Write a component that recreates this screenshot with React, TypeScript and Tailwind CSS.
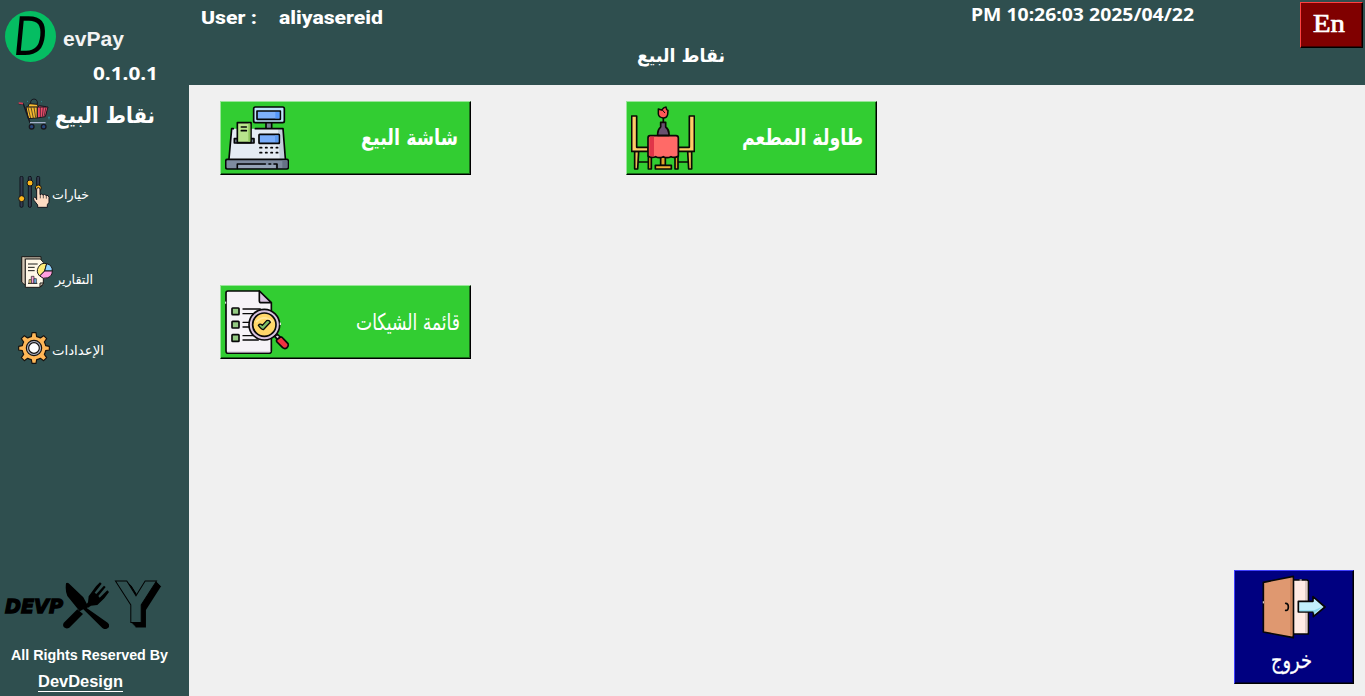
import { useLayoutEffect, useRef, useState } from "react";
import type { ReactNode } from "react";

/** A single line of text, stretched horizontally to fill the width of its box. */
function FitText({ className, children, rtl = false }: { className: string; children: ReactNode; rtl?: boolean }) {
  const box = useRef<HTMLDivElement>(null);
  const line = useRef<HTMLSpanElement>(null);
  const [scale, setScale] = useState(1);
  useLayoutEffect(() => {
    if (box.current && line.current && line.current.offsetWidth > 0) {
      setScale(box.current.offsetWidth / line.current.getBoundingClientRect().width);
    }
  }, []);
  return (
    <div ref={box} dir="ltr" className={"shrink-0 whitespace-nowrap text-left " + className}>
      <span ref={line} dir={rtl ? "rtl" : "ltr"} className="inline-block origin-left" style={{ transform: `scaleX(${scale})` }}>
        {children}
      </span>
    </div>
  );
}

function CartIcon() {
  return (
    <svg viewBox="54 294 96 96" className="size-8 shrink-0" fill="none" stroke="#17171f" strokeWidth="3" strokeLinejoin="round">
      <path d="M92 318V305q2-8 10-8t10 8v13" />
      <path d="M83 322l5-11 24 2 3 9z" fill="#f9bd31" />
      <path d="M113 321l5-4 20 3 1 22h-27z" fill="#ee5271" />
      <path d="M78 321h34v33l-27 2z" fill="#f5b82e" />
      <path d="M112 321h32l-8 29-24 4z" fill="#ee4c6a" />
      <path d="M84 322l8 33M93 322l7 32M102 322l5 31M121 322v30M130 322l-3 28M138 322l-6 28" strokeWidth="2" />
      <path d="M56 311l14 1 20 56h47" strokeWidth="4" />
      <path d="M56 309l13 2" stroke="#d83a55" strokeWidth="5" />
      <path d="M90 368h47" stroke="#a5b4cd" strokeWidth="4" />
      <circle cx="95" cy="380" r="7" fill="#27467c" strokeWidth="4" />
      <circle cx="131" cy="380" r="7" fill="#27467c" strokeWidth="4" />
      <path d="M145 352h4M147 350v8M81 304h3M123 305h3" stroke="#33a7ba" strokeWidth="2" />
    </svg>
  );
}

function SlidersIcon() {
  return (
    <svg viewBox="54 48 96 96" className="size-8 shrink-0" fill="none" stroke="#10141d" strokeWidth="3" strokeLinejoin="round">
      <rect x="60" y="49" width="9" height="93" rx="4" fill="#343d50" />
      <rect x="85" y="49" width="9" height="93" rx="4" fill="#343d50" />
      <rect x="110" y="49" width="9" height="50" rx="4" fill="#343d50" />
      <circle cx="65" cy="116" r="9" fill="#ffb71b" />
      <circle cx="90" cy="69" r="9" fill="#ffb71b" />
      <circle cx="115" cy="84" r="9" fill="#ffb71b" />
      <path d="M110 119V87q0-4 5-4t5 4v17q5-4 9 1 5-4 9 1 8-2 9 6v15l-5 7v8h-29v-7l-11-14q-4-8 2-10 4 0 6 8z" fill="#fddcc3" />
      <path d="M121 104v11M130 105v10M139 107v9" strokeWidth="2" />
    </svg>
  );
}

function ReportIcon() {
  return (
    <svg viewBox="63 288 96 96" className="size-8 shrink-0" fill="none" stroke="#1b1a18" strokeWidth="3" strokeLinejoin="round">
      <path d="M65 290h58v83H73l-8-7z" fill="#b5a999" />
      <path d="M70 292v78" stroke="#e7dcca" strokeWidth="2" />
      <path d="M76 297h45l9 10v66l-9 9H76z" fill="#fff8e8" />
      <path d="M120 381v-12h11z" fill="#e6d8c4" />
      <path d="M84 312h29M84 322h20M84 332h20" strokeWidth="3" />
      <path d="M84 370h28" />
      <path d="M87 359h7v11h-7z" fill="#fce67c" strokeWidth="2" />
      <path d="M94 349h8v21h-8z" fill="#f59fd5" strokeWidth="2" />
      <path d="M102 356h7v14h-7z" fill="#75b9f0" strokeWidth="2" />
      <path d="M134 333L140 311A22 22 0 0 0 119 348z" fill="#fdec77" />
      <path d="M134 333L140 311A22 22 0 0 1 157 333z" fill="#8ed2ff" />
      <path d="M134 333H157A22 22 0 0 1 119 348z" fill="#ff9fdf" />
    </svg>
  );
}

function GearIcon() {
  return (
    <svg viewBox="54 516 96 96" className="size-8 shrink-0" stroke="#14120f" strokeWidth="3.5" strokeLinejoin="round">
      <path
        fill="#ffb757"
        d="M96 518h12l2 12q6 1 11 4l10-7 9 9-7 10q3 5 4 11l11 2v11l-11 2q-1 6-4 11l7 10-9 9-10-7q-5 3-11 4l-2 11H96l-2-11q-6-1-11-4l-10 7-9-9 7-10q-3-5-4-11l-11-2v-11l11-2q1-6 4-11l-7-10 9-9 10 7q5-3 11-4z"
      />
      <circle cx="102" cy="564" r="23" fill="#aeb2c6" />
      <circle cx="102" cy="564" r="16" fill="#fff" />
    </svg>
  );
}

function RegisterIcon() {
  return (
    <svg viewBox="45 48 192 192" className="size-16 shrink-0" fill="none" stroke="#050607" strokeWidth="5" strokeLinejoin="round" strokeLinecap="round">
      <rect x="168" y="96" width="17" height="22" fill="#788293" />
      <rect x="131" y="51" width="92" height="47" rx="5" fill="#bfe4fb" />
      <rect x="141" y="63" width="70" height="25" fill="#7db0fa" />
      <path d="M196 66h12v19h-12z" fill="#569afd" stroke="none" />
      <path d="M65 116h154l8 92H57z" fill="#e4ebf3" stroke="none" />
      <path d="M204 118h13l7 89h-15z" fill="#c3cedb" stroke="none" />
      <path d="M70 116h-5l-8 90M136 116h83l7 90" />
      <path d="M81 146h-8v13h59v-13h-9" fill="#717c8e" />
      <path d="M82 158V98h41v60z" fill="#b9e58c" />
      <path d="M115 101h6v54h-6z" fill="#8fc75d" stroke="none" />
      <path d="M94 111h15M94 122h15" />
      <rect x="147" y="133" width="61" height="27" rx="2" fill="#79adfa" />
      <path d="M195 136h10v20h-10z" fill="#5c9bf1" stroke="none" />
      <path d="M150 173h5M167 173h4M183 173h4M199 173h4M150 188h5M167 188h4M183 188h4M199 188h4" />
      <rect x="47" y="208" width="188" height="29" rx="5" fill="#7e8b9f" />
      <path d="M217 211h15v23h-15z" fill="#667286" stroke="none" />
      <path d="M82 235v-13h84M177 222h5M192 222h9v13" />
      <path d="M85 225h112v9H85z" fill="#97a4b8" stroke="none" />
    </svg>
  );
}

function TableIcon() {
  return (
    <svg viewBox="45 48 192 192" className="size-16 shrink-0" fill="none" stroke="#0b0905" strokeWidth="5" strokeLinejoin="round" strokeLinecap="round">
      <path d="M68 216h29M185 216h31" />
      <path d="M56 184h12l-3 53h-9zM215 184h12v53h-9z" fill="#efbd57" />
      <path d="M47 78h15v94h35v12H47zM220 78h15v106h-48v-12h33z" fill="#ffcc67" />
      <path d="M97 198h9v39h-9zM177 198h9v39h-9z" fill="#dca12b" />
      <path d="M134 201h14v26h-14z" fill="#dca12b" />
      <path d="M118 226h48v11h-48z" fill="#efaf37" />
      <path d="M102 137h78q7 0 7 7v54q-11 7-22 2-12 6-23 0-12 6-23 0-12 5-23-2v-54q0-7 6-7z" fill="#ff6a67" />
      <path d="M103 140h11v58q-8 2-14-1v-54q0-3 3-3z" fill="#e03449" stroke="none" />
      <path d="M134 97h15v14q10 8 10 20v5h-34v-5q0-12 9-20z" fill="#67506f" />
      <path d="M142 84v12" />
      <path d="M127 57l10 3q6-8 13-9l2 8 4 2-1 12q-2 11-13 11-14-2-15-12z" fill="#ff5756" strokeWidth="4.5" />
      <path d="M139 60l7 8" strokeWidth="3" />
    </svg>
  );
}

function ChecklistIcon() {
  return (
    <svg viewBox="45 45 192 192" className="size-16 shrink-0" fill="none" stroke="#090909" strokeWidth="5" strokeLinejoin="round" strokeLinecap="round">
      <path d="M54 48h94l36 36v144q0 7-7 7H54q-6 0-6-7V53q0-5 6-5z" fill="#f6f3f7" />
      <path d="M148 48v29q0 6 6 6h30z" fill="#d9c4e0" />
      <path d="M52 230h128" stroke="#dfd4e4" strokeWidth="3" />
      <rect x="66" y="99" width="21" height="20" rx="2" fill="#94ca82" />
      <rect x="66" y="139" width="21" height="20" rx="2" fill="#94ca82" />
      <rect x="66" y="179" width="21" height="20" rx="2" fill="#94ca82" />
      <path d="M99 102h52M99 116h31M99 142h20M99 156h20M99 182h33M99 195h46" strokeWidth="4" />
      <circle cx="163" cy="149" r="46" fill="#d8c3df" />
      <circle cx="163" cy="149" r="35" fill="#ffd76a" />
      <path d="M140 139q23-21 46 0" stroke="#ffe79b" strokeWidth="5" />
      <path d="M145 151q5-7 12 0l13-14q8-3 11 5l-21 22q-5 0-15-13z" fill="#7dbe68" strokeWidth="4" />
      <path d="M194 184l8-6 9 8-8 8z" fill="#e6d7e8" />
      <path d="M201 194l10-8q4-1 8 4l15 16q3 7-4 13-6 4-12-1l-17-17q-3-4 0-7z" fill="#ef3341" />
      <path d="M47 81v4M211 144v5" stroke="#fff" strokeWidth="3" />
    </svg>
  );
}

function DoorIcon() {
  return (
    <svg viewBox="111 45 192 192" className="size-16 shrink-0" fill="none" stroke="#070707" strokeWidth="5" strokeLinejoin="round" strokeLinecap="round">
      <path d="M205 60h40q5 0 5 5v157h-45z" fill="#ffebe5" />
      <path d="M240 63h7v155h-7z" fill="#dfcbc7" stroke="none" />
      <path d="M115 67l90-18v184l-90-17z" fill="#df9870" />
      <path d="M195 54h7v172h-7z" fill="#cf875f" stroke="none" />
      <path d="M182 130q8 0 8 11t-8 10" />
      <path d="M220 124h44v-14l36 31-35 29v-14h-45z" fill="#c3f0fc" />
      <path d="M223 151h45l26-12-27 22-2-7h-42z" fill="#88d7ee" stroke="none" />
      <path d="M115 125v4M225 60h4" stroke="#fff2e8" strokeWidth="3" />
    </svg>
  );
}

function CutleryIcon() {
  return (
    <svg viewBox="189 69 138 141" className="h-[47px] w-[46px] shrink-0" fill="#000">
      <path d="M198 73q3-4 8 0l44 42 12 22q2 8-1 11l62 43q9 9 1 16-9 7-17 0l-57-56-11 6-37-46q-7-15-4-38z" />
      <path d="M232 151l17 14-41 41q-9 5-16-1-6-8 1-15z" />
      <path d="M264 130l2-18 22-30 12-12 5 4-21 27 5 4 23-25 5 4-22 27 4 5 23-22 5 5-14 19-21 20-19 2-9 6-8-6z" />
    </svg>
  );
}

function TileButton({ icon, label, labelClass }: { icon: ReactNode; label: string; labelClass: string }) {
  return (
    <button
      type="button"
      className="flex h-[74px] w-[251px] shrink-0 border border-t-[#98e698] border-l-[#98e698] border-r-black border-b-black bg-[#32cd32] pl-1 pt-1 shadow-[inset_-1px_-1px_0_#196719]"
    >
      {icon}
      <FitText rtl className={labelClass}>{label}</FitText>
    </button>
  );
}

function Sidebar() {
  return (
    <aside className="flex h-[696px] w-[189px] shrink-0 flex-col bg-[#2f4f4f] text-white">
      <div className="flex h-[62px] shrink-0 pl-[5px] pt-[11px]">
        <div className="flex size-[51px] shrink-0 items-center justify-center rounded-full bg-[#05bd62]">
          <span className="inline-block -skew-x-6 scale-x-[0.92] font-['DejaVu_Sans_Condensed','DejaVu_Sans'] text-[53px] leading-[49px] text-black">D</span>
        </div>
        <FitText className="ml-[7px] mt-[14px] h-7 w-[61px] font-['Liberation_Sans',sans-serif] text-[21px] font-bold leading-[28px] text-[#f3f3f3]">evPay</FitText>
      </div>
      <FitText className="ml-[93px] h-[22px] w-[65px] font-['Noto_Sans',sans-serif] text-[18px] font-bold leading-[22px]">0.1.0.1</FitText>
      <nav className="flex flex-col">
        <div className="mt-[14px] flex h-8 pl-[18px]">
          <CartIcon />
          <FitText rtl className="ml-[5px] mt-[2px] h-8 w-[100px] font-['DejaVu_Sans',sans-serif] text-[22px] font-bold leading-[32px]">نقاط البيع</FitText>
        </div>
        <div className="mt-[46px] flex h-8 pl-[18px]">
          <SlidersIcon />
          <FitText rtl className="ml-[2px] mt-[7px] h-6 w-[37px] font-['DejaVu_Sans',sans-serif] text-[13px] leading-[24px]">خيارات</FitText>
        </div>
        <div className="mt-12 flex h-8 pl-[21px]">
          <ReportIcon />
          <FitText rtl className="ml-[2px] mt-[12px] h-6 w-[38px] font-['DejaVu_Sans',sans-serif] text-[13px] leading-[24px]">التقارير</FitText>
        </div>
        <div className="mt-11 flex h-8 pl-[18px]">
          <GearIcon />
          <FitText rtl className="ml-[2px] mt-[7px] h-6 w-[52px] font-['DejaVu_Sans',sans-serif] text-[13px] leading-[24px]">الإعدادات</FitText>
        </div>
      </nav>
      <div className="mt-auto flex h-[54px] items-center pl-[5px] text-black">
        <FitText className="mt-[2px] h-7 w-[58px] font-['DejaVu_Sans',sans-serif] text-[20px] font-bold italic leading-[28px] [-webkit-text-stroke:1.4px_black]">DEVP</FitText>
        <CutleryIcon />
        <FitText className="-mt-[4px] ml-[7px] h-[54px] w-[40px] font-['DejaVu_Sans',sans-serif] text-[57px] font-bold leading-[54px] text-[#2f4f4f] [-webkit-text-stroke:1px_black] [text-shadow:1px_1px_0_black,2px_2px_0_black,3px_3px_0_black,4px_4px_0_black,5px_5px_0_black]">Y</FitText>
      </div>
      <FitText className="ml-[11px] mt-[13px] h-5 w-[157px] font-['Liberation_Sans',sans-serif] text-[14px] font-bold leading-[20px]">All Rights Reserved By</FitText>
      <FitText className="mb-[4px] ml-[38px] mt-[5px] h-[22px] w-[85px] border-b border-white font-['Liberation_Sans',sans-serif] text-[16px] font-bold leading-[23px]">DevDesign</FitText>
    </aside>
  );
}

function Header() {
  return (
    <header className="flex h-[85px] shrink-0 bg-[#2f4f4f] text-white">
      <FitText className="ml-3 mt-[6px] h-6 w-[56px] font-['Roboto',sans-serif] text-[18px] font-extrabold leading-[24px]">User :</FitText>
      <FitText className="ml-[22px] mt-[6px] h-6 w-[104px] font-['Roboto',sans-serif] text-[18px] font-extrabold leading-[24px]">aliyasereid</FitText>
      <FitText rtl className="ml-[254px] mt-[39px] h-8 w-[88px] font-['DejaVu_Sans',sans-serif] text-[19px] font-bold leading-[32px]">نقاط البيع</FitText>
      <FitText className="ml-[246px] mt-[2px] h-6 w-[223px] font-['Noto_Sans',sans-serif] text-[18px] font-bold leading-[24px]">PM 10:26:03 2025/04/22</FitText>
      <button
        type="button"
        className="ml-[106px] mt-[2px] flex h-[46px] w-[63px] shrink-0 justify-start border border-t-[#ff4040] border-l-[#ff4040] border-r-black border-b-black bg-[#800000] shadow-[inset_-1px_-1px_0_#400000]"
      >
        <FitText className="ml-3 mt-[5px] h-8 w-[32px] font-['Liberation_Serif',serif] text-[26px] leading-[32px] [-webkit-text-stroke:0.7px_white]">En</FitText>
      </button>
    </header>
  );
}

export default function App() {
  return (
    <div className="flex h-[696px] w-[1365px] overflow-hidden bg-[#f0f0f0]">
      <Sidebar />
      <div className="flex min-w-0 flex-1 flex-col">
        <Header />
        <main className="flex flex-1 flex-col pl-[31px] pt-4 text-white">
          <div className="flex gap-[155px]">
            <TileButton icon={<RegisterIcon />} label="شاشة البيع" labelClass="ml-[72px] mt-[14px] h-9 w-[97px] font-['DejaVu_Sans',sans-serif] text-[22px] font-bold leading-[36px]" />
            <TileButton icon={<TableIcon />} label="طاولة المطعم" labelClass="ml-[47px] mt-[14px] h-9 w-[121px] font-['DejaVu_Sans',sans-serif] text-[22px] font-bold leading-[36px]" />
          </div>
          <div className="mt-[110px] flex">
            <TileButton icon={<ChecklistIcon />} label="قائمة الشيكات" labelClass="ml-[67px] mt-[14px] h-9 w-[104px] font-['DejaVu_Sans',sans-serif] text-[23px] leading-[36px]" />
          </div>
          <button
            type="button"
            className="mb-3 mr-[11px] mt-auto flex h-[114px] w-[120px] shrink-0 flex-col self-end border border-t-[#4040ff] border-l-[#4040ff] border-r-black border-b-black bg-[#000080] pl-[27px] pt-1 shadow-[inset_-1px_-1px_0_#000040]"
          >
            <DoorIcon />
            <FitText rtl className="ml-[9px] mt-[3px] h-9 w-[41px] font-['DejaVu_Sans',serif] text-[23px] leading-[36px] [-webkit-text-stroke:0.3px_white]">خروج</FitText>
          </button>
        </main>
      </div>
    </div>
  );
}
